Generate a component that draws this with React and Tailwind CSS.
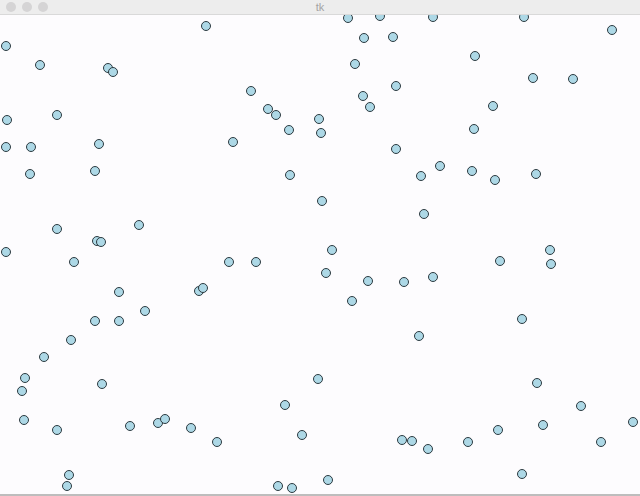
import React from "react";

const DOTS = [
  [5.7, 46.3], [40, 65.3], [108.3, 67.7], [112.7, 71.7], [7.3, 120], [56.7, 115.3],
  [5.7, 146.7], [31, 146.7], [98.7, 144],
  [206, 25.7], [251.3, 91.3], [268, 109], [276, 114.7], [318.7, 119], [320.5, 132.7],
  [288.7, 130.3], [233, 142.3],
  [348.3, 18.3], [380, 16], [433.3, 16.5], [364.3, 38.3], [393, 36.7], [475.3, 55.7],
  [354.7, 63.7], [396.3, 86], [363.3, 95.7], [370, 107.3], [474.3, 129.3], [395.7, 149.3],
  [439.5, 165.8],
  [524, 16.5], [611.7, 30.3], [532.7, 78], [572.7, 78.7], [493, 106],
  [30.3, 174], [95, 170.7], [57.3, 229.3], [139.3, 225.3], [97.3, 241.3], [101.3, 242.3],
  [6.3, 252.3], [74, 262], [119.3, 292], [144.7, 311], [95, 320.7], [119.3, 320.7],
  [290.3, 175], [322, 201], [229, 262], [256, 262], [198.7, 290.7], [202.7, 287.7],
  [471.7, 170.7], [420.7, 175.7], [424.3, 213.7], [331.7, 250], [326, 273], [368.3, 281],
  [404, 281.7], [432.7, 277], [351.7, 301],
  [494.7, 179.7], [536, 174], [550, 250.3], [551, 264.3], [500.3, 261.3], [521.7, 319.3],
  [70.7, 340], [43.7, 357.3], [24.7, 378], [21.7, 390.7], [102, 384.3], [24, 420],
  [57.3, 430], [129.7, 425.7], [157.8, 423.3], [69.3, 475.3], [67, 485.7],
  [317.7, 378.7], [285.3, 405], [164.7, 419.3], [191, 427.7], [217.3, 442.3], [302, 435],
  [278.3, 485.7], [292, 488],
  [419, 336], [401.7, 440.3], [412.3, 441], [427.7, 449], [468.3, 442], [327.7, 480.3],
  [536.7, 382.7], [581.3, 406.3], [633, 422], [498, 430], [543, 425.3], [601.3, 442],
  [521.7, 474],
];

export default function App() {
  return (
    <div className="w-[640px] h-[496px] flex flex-col bg-[#fdfcfe] overflow-hidden" style={{ fontFamily: '"Liberation Sans", Arial, sans-serif' }}>
      <div className="relative h-[15px] shrink-0 bg-[#ededed] border-b border-[#d9d9d9] flex items-center">
        <div className="flex items-center gap-[6px] pl-[6px]">
          <span className="w-[10px] h-[10px] rounded-full bg-[#d5d4d5]" />
          <span className="w-[10px] h-[10px] rounded-full bg-[#d5d4d5]" />
          <span className="w-[10px] h-[10px] rounded-full bg-[#d5d4d5]" />
        </div>
        <div className="absolute inset-0 flex items-center justify-center text-[11px] leading-none text-[#a3a3a3]">tk</div>
      </div>
      <div className="relative flex-1 overflow-hidden bg-[#fdfcfe]">
        {DOTS.map(([x, y], i) => (
          <div
            key={i}
            className="absolute w-[10px] h-[10px] rounded-full bg-[#add8e6] border border-[#2c3a40]"
            style={{ left: Math.round(x - 5), top: Math.round(y - 5 - 15) }}
          />
        ))}
      </div>
      <div className="h-[2px] shrink-0 bg-[#bdbdbd]" />
    </div>
  );
}
